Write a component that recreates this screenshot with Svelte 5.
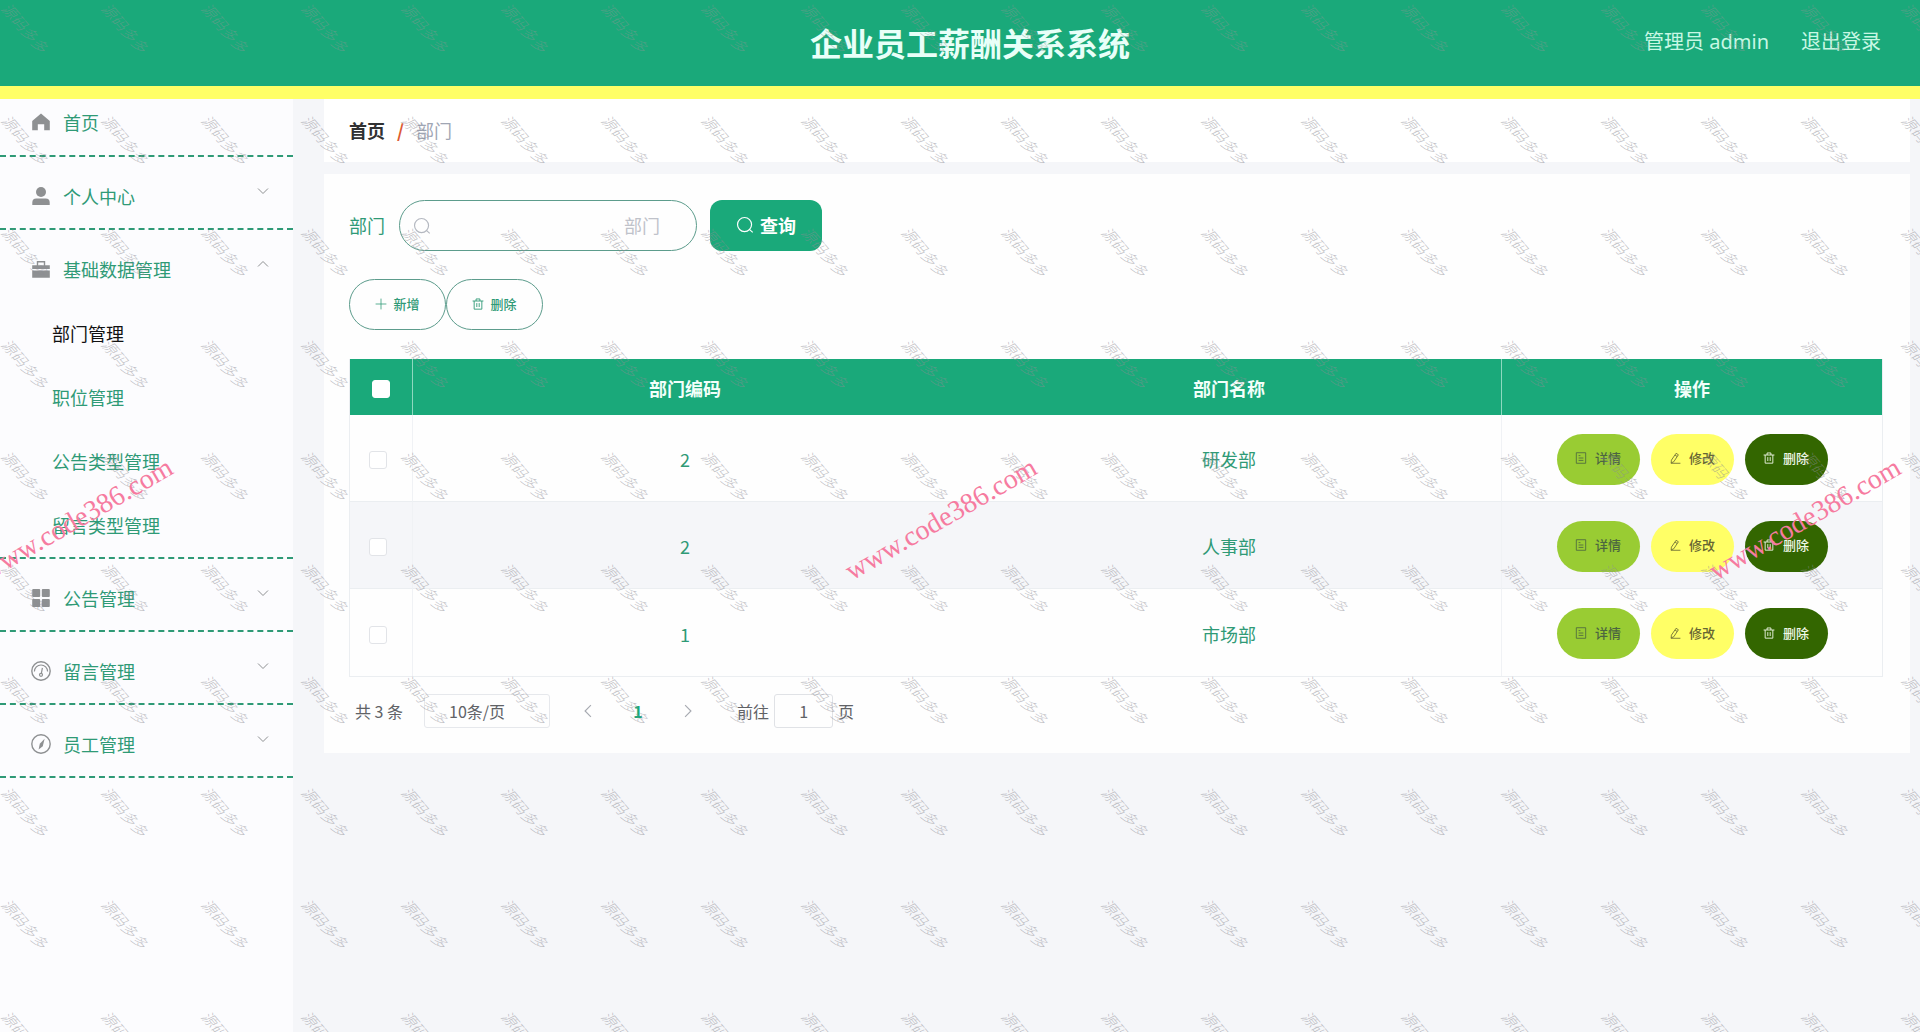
<script>
  const menu = [
    { title: '首页', icon: 'home' },
    { title: '个人中心', icon: 'user', arrow: 'down' },
    {
      title: '基础数据管理', icon: 'case', arrow: 'up',
      children: ['部门管理', '职位管理', '公告类型管理', '留言类型管理']
    },
    { title: '公告管理', icon: 'grid', arrow: 'down' },
    { title: '留言管理', icon: 'gauge', arrow: 'down' },
    { title: '员工管理', icon: 'compass', arrow: 'down' }
  ];

  const rows = [
    { code: '2', name: '研发部' },
    { code: '2', name: '人事部' },
    { code: '1', name: '市场部' }
  ];

  const marks = Array.from({ length: 200 });
  let active = $state('部门管理');
  let keyword = $state('');
  let selected = $state([false, false, false]);
  let page = $state('1');

  const toggleAll = (e) => { selected = rows.map(() => e.target.checked); };
</script>

{#snippet icon(name)}
  <svg class="icon" viewBox="0 0 20 20" fill="none" stroke="currentColor" aria-hidden="true">
    {#if name === 'home'}
      <path fill="currentColor" stroke="none" d="M10 1.5 1.2 9v9.3h5.6v-6.1h6.4v6.1h5.6V9z" />
    {:else if name === 'user'}
      <g fill="currentColor" stroke="none">
        <circle cx="10" cy="6" r="5" />
        <path d="M1.3 19v-2.6a4 4 0 0 1 4-4h9.4a4 4 0 0 1 4 4V19z" />
      </g>
    {:else if name === 'case'}
      <path fill="currentColor" stroke="none" d="M1.2 6.2h4.6V2h8.4v4.2h4.6v3.9H1.2zM7.2 6.2h5.6V3.4H7.2zM1.2 11.4h17.6v7.4H1.2z" fill-rule="evenodd" />
    {:else if name === 'grid'}
      <g fill="currentColor" stroke="none">
        <rect x="1.2" y="1" width="8" height="8" rx="1" />
        <rect x="10.8" y="1" width="8" height="8" rx="1" />
        <rect x="1.2" y="11" width="8" height="8" rx="1" />
        <rect x="10.8" y="11" width="8" height="8" rx="1" />
      </g>
    {:else if name === 'gauge'}
      <circle cx="10" cy="10" r="9.2" stroke-width="1.4" />
      <path stroke-width="1.2" d="M3.4 10.6a6.6 6.6 0 0 1 13.2 0M11.4 6.8l-1 5.4" />
      <circle cx="10" cy="13.8" r="1.5" stroke-width="1.2" />
    {:else if name === 'compass'}
      <circle cx="10" cy="10" r="9.2" stroke-width="1.4" />
      <path fill="currentColor" stroke="none" d="m13.6 4.8-1.8 7.4-4.2 3.2 1.2-5.6z" />
    {:else if name === 'search'}
      <circle cx="9.5" cy="9.5" r="7.8" stroke-width="1.3" />
      <path stroke-width="1.3" d="m15.2 15.2 3.4 3" />
    {:else if name === 'plus'}
      <path stroke-width="1.3" d="M10 1v18M1 10h18" />
    {:else if name === 'trash'}
      <path stroke-width="1.5" d="M1 5h18M3.6 5v13.6h12.8V5M6.8 5V1.6h6.4V5M8 8.5V15M12 8.5V15" />
    {:else if name === 'doc'}
      <path stroke-width="1.4" d="M2.2 1.2h15.6v17.6H2.2zM6 6h3M6 10h8M6 14h8" />
    {:else if name === 'edit'}
      <path stroke-width="1.4" d="M11.8 2.2 15.6 4.6 8 16.2l-4.4 2 .4-4.6zM10.2 5.4l3.4 2M3 18.8h16" />
    {/if}
  </svg>
{/snippet}

{#snippet chevron(dir)}
  <svg class="chevron {dir}" viewBox="0 0 12 12" fill="none" stroke="currentColor" aria-hidden="true">
    <path d="m1 3.5 5 5 5-5" />
  </svg>
{/snippet}

<div class="page">
  <header class="header">
    <h1>企业员工薪酬关系系统</h1>
    <div class="account">
      <span>管理员 admin</span>
      <a href="#logout">退出登录</a>
    </div>
  </header>

  <div class="body">
    <nav class="sidebar">
      {#each menu as item}
        <div class="group">
          <button class="menu-item" class:first={!item.arrow}>
            {@render icon(item.icon)}
            <span class="menu-title">{item.title}</span>
            {#if item.arrow}{@render chevron(item.arrow)}{/if}
          </button>
          {#if item.children}
            {#each item.children as child}
              <button class="sub-item" class:active={active === child} onclick={() => active = child}>{child}</button>
            {/each}
          {/if}
        </div>
      {/each}
    </nav>

    <main class="content">
      <div class="breadcrumb">
        <a href="#home">首页</a>
        <span class="slash">/</span>
        <span class="current">部门</span>
      </div>

      <section class="card">
        <form class="search" onsubmit={(e) => e.preventDefault()}>
          <label for="dept">部门</label>
          <div class="search-box">
            {@render icon('search')}
            <input id="dept" placeholder="部门" bind:value={keyword} />
          </div>
          <button class="query">{@render icon('search')}<span>查询</span></button>
        </form>

        <div class="tools">
          <button class="pill">{@render icon('plus')}<span>新增</span></button>
          <button class="pill">{@render icon('trash')}<span>删除</span></button>
        </div>

        <table>
          <thead>
            <tr>
              <th class="check"><input type="checkbox" aria-label="全选" onchange={toggleAll} /></th>
              <th>部门编码</th>
              <th>部门名称</th>
              <th class="ops">操作</th>
            </tr>
          </thead>
          <tbody>
            {#each rows as row, i}
              <tr>
                <td class="check"><input type="checkbox" aria-label={row.name} bind:checked={selected[i]} /></td>
                <td>{row.code}</td>
                <td>{row.name}</td>
                <td class="ops">
                  <div class="actions">
                    <button class="pill detail">{@render icon('doc')}<span>详情</span></button>
                    <button class="pill edit">{@render icon('edit')}<span>修改</span></button>
                    <button class="pill del">{@render icon('trash')}<span>删除</span></button>
                  </div>
                </td>
              </tr>
            {/each}
          </tbody>
        </table>

        <div class="pagination">
          <span>共 3 条</span>
          <select aria-label="每页条数">
            <option>10条/页</option>
            <option>20条/页</option>
          </select>
          <div class="pager">
            <button aria-label="上一页">{@render chevron('left')}</button>
            <button class="num">1</button>
            <button aria-label="下一页">{@render chevron('right')}</button>
          </div>
          <label class="jump">前往 <input bind:value={page} /> 页</label>
        </div>
      </section>
    </main>
  </div>

  <div class="marks" aria-hidden="true">
    {#each marks as _}
      <div class="mark"><span>源码多多</span></div>
    {/each}
  </div>
  <div class="sites" aria-hidden="true">
    <span>www.code386.com</span>
    <span>www.code386.com</span>
    <span>www.code386.com</span>
  </div>
</div>

<style>
  :global(body) { margin: 0; }
  .page {
    position: relative; overflow: hidden;
    display: flex; flex-direction: column;
    min-height: 100vh; box-sizing: border-box;
    background: #f5f6f9; color: #2f9a76;
    font-family: 'Noto Sans CJK SC', sans-serif;
    font-size: 18px; line-height: 24px;
  }
  .page :global(*) { box-sizing: border-box; }
  button, input, select { font: inherit; color: inherit; margin: 0; }
  button { border: none; background: none; padding: 0; cursor: pointer; }
  a { color: inherit; text-decoration: none; }
  .icon { width: 20px; height: 20px; flex: none; }
  .chevron { width: 12px; height: 12px; flex: none; }
  .up { transform: rotate(180deg); }
  .left { transform: rotate(90deg); }
  .right { transform: rotate(-90deg); }

  .header {
    display: grid; grid-template-columns: 1fr auto 1fr; align-items: center;
    height: 99px; padding: 0 39px 2px 59px;
    background: #1aa97a; border-bottom: 13px solid #ffff66; color: #e8fff8;
  }
  h1 { grid-column: 2; margin: 0; font-size: 32px; line-height: 40px; font-weight: 700; }
  .account {
    display: flex; justify-content: flex-end; gap: 32px;
    font-family: 'Noto Sans', 'Noto Sans CJK SC', sans-serif;
    font-size: 20px; color: #c8f7e4;
  }

  .body { flex: 1; display: flex; }
  .sidebar { width: 293px; flex: none; background: #fcfcfe; }
  .group { border-bottom: 2px dashed #2f9a76; }
  .menu-item {
    display: flex; align-items: center; width: 100%; height: 71px;
    padding: 6px 24px 0 31px; text-align: left;
  }
  .menu-item.first { height: 56px; padding: 0 24px 10px 31px; }
  .menu-item .icon { color: #8e9092; }
  .menu-item .chevron { color: #8e9092; margin-bottom: 10px; }
  .menu-title { flex: 1; padding-left: 12px; }
  .sub-item { display: block; width: 100%; height: 64px; padding-left: 52px; text-align: left; }
  .sub-item.active { color: #111; }

  .content { flex: 1; min-width: 0; padding: 0 10px 0 31px; }
  .breadcrumb {
    display: flex; align-items: center; gap: 12px;
    height: 63px; padding: 0 25px 2px; margin-bottom: 12px;
    background: #fff; color: #303133;
  }
  .breadcrumb a { font-weight: 700; }
  .slash { color: #dd5a30; font-weight: 700; }
  .current { color: #a0a6b4; }

  .card { background: #fefefe; padding: 26px 27px 25px 25px; }
  .search { display: flex; align-items: center; margin-bottom: 28px; }
  .search label { padding-bottom: 2px; }
  .search-box {
    display: flex; align-items: center;
    width: 298px; height: 51px; margin: 0 13px 0 14px; padding: 0 36px 0 13px;
    border: 1px solid #5c9c8c; border-radius: 26px; color: #b4b8c0;
  }
  .search-box input {
    flex: 1; min-width: 0; padding: 0 0 2px; border: none; outline: none; background: none; text-align: right;
  }
  .search-box input::placeholder { color: #bfc2ca; opacity: 1; }
  .search-box .icon, .query .icon { width: 18px; height: 18px; }
  .query {
    display: flex; align-items: center; justify-content: center; gap: 6px;
    width: 112px; height: 51px; padding-bottom: 2px; border-radius: 12px;
    background: #1aa97a; color: #fff; font-weight: 700;
  }
  .tools { display: flex; margin-bottom: 29px; }
  .pill {
    display: flex; align-items: center; justify-content: center; gap: 6px;
    width: 97px; height: 51px; padding-bottom: 2px; border: 1px solid #5c9c8c; border-radius: 26px;
    font-size: 13px; font-weight: 500;
  }
  .pill .icon { width: 12px; height: 12px; }

  table {
    width: 100%; table-layout: fixed; border-collapse: separate; border-spacing: 0;
    border: 1px solid #ebeef1; border-top: none; text-align: center;
  }
  th { height: 56px; padding: 2px 0 0; background: #1aa97a; color: #f2fffa; font-weight: 700; }
  td { height: 87px; padding: 2px 0 0; border-bottom: 1px solid #ebeef1; }
  tbody tr:last-child td { border-bottom: none; }
  tbody tr:nth-child(even) { background: #f5f6f9; }
  .check { width: 63px; border-right: 1px solid #f0f2f5; }
  .ops { width: 381px; border-left: 1px solid #f0f2f5; }
  th.check, th.ops { border-color: #8ed8bf; }
  .check input {
    appearance: none; display: block; width: 18px; height: 18px; margin: 2px 0 0 19px;
    border: 1px solid #e2e4e8; border-radius: 3px; background: #fff;
  }
  th.check input { margin-left: 22px; border-color: #fff; }
  .check input:checked { background: #1aa97a; }
  .actions { display: flex; justify-content: center; gap: 11px; }
  .actions .pill { width: 83px; gap: 8px; border: none; }
  .detail { background: #99cc33; color: #4c6640; }
  .edit { background: #ffff66; color: #666633; }
  .del { background: #336600; color: #f0f8e8; }

  .pagination {
    display: flex; align-items: center; height: 34px; margin-top: 17px; padding-left: 6px;
    font-size: 16px; color: #606266;
  }
  select {
    appearance: none; width: 126px; height: 34px; margin-left: 21px; padding: 0 20px 0 0;
    border: 1px solid #e6e8ec; border-radius: 3px; background: none; text-align: center; text-align-last: center;
  }
  .pager { display: flex; margin: 0 24px 0 13px; }
  .pager button { width: 50px; height: 34px; color: #a8abb2; }
  .pager .chevron { width: 14px; height: 14px; }
  .pager .num { color: #1aa97a; font-weight: 700; }
  .jump { display: flex; align-items: center; gap: 5px; }
  .jump input {
    width: 59px; height: 34px; padding: 0; text-align: center;
    border: 1px solid #e0e2e6; border-radius: 3px; background: none;
  }

  /* watermark layers over the whole page */
  .marks {
    position: absolute; inset: 0; pointer-events: none;
    display: grid; grid-template-columns: repeat(20, 100px); grid-auto-rows: 112px;
  }
  .mark { display: flex; align-items: center; width: 50px; height: 55px; justify-content: center; }
  .mark span {
    transform: rotate(49deg); white-space: nowrap;
    font-size: 15px; line-height: 15px; font-style: italic; font-weight: 300;
    color: rgba(140, 140, 148, 0.55);
  }
  .mark:nth-child(-n + 20) span { color: rgba(140, 150, 148, 0.5); }
  .sites {
    position: absolute; top: 503px; left: -355px; right: -317px; pointer-events: none;
    display: flex; justify-content: space-around;
    font-family: 'Liberation Serif', serif; font-size: 28px; line-height: 32px; color: #f67ba0;
  }
  .sites span { transform: rotate(-30deg); }
</style>
